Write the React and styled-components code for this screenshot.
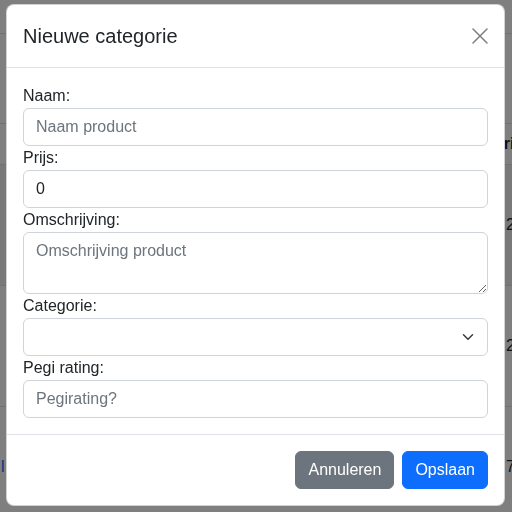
import styled, { createGlobalStyle } from "styled-components";

const GlobalStyle = createGlobalStyle`
    * {
        box-sizing: border-box;
    }

    body {
        margin: 0;
        font-family: "Liberation Sans", Arial, sans-serif;
        font-size: 16px;
        line-height: 1.5;
        color: #212529;
        background: #fff;
        overflow: hidden;
    }
`;

/* page that sits behind the backdrop */

const Page = styled.div`
    height: 100vh;
    overflow: hidden;
`;

const TopBar = styled.div`
    height: 34px;
    border-bottom: 1px solid #dee2e6;
`;

const Intro = styled.div`
    height: 89px;
`;

const Table = styled.div`
    border-top: 1px solid #dee2e6;
`;

const Row = styled.div`
    display: grid;
    grid-template-columns: 490px 1fr;
    align-items: center;
    height: ${({ $head }) => ($head ? "41px" : "121px")};
    border-bottom: 1px solid #dee2e6;
    background: ${({ $striped }) => ($striped ? "rgba(0, 0, 0, 0.05)" : "transparent")};
    font-weight: ${({ $head }) => ($head ? 700 : 400)};
`;

const Cell = styled.div`
    padding-left: ${({ $offset }) => $offset || 0}px;
    white-space: nowrap;
    overflow: hidden;
`;

const Link = styled.span`
    color: #0d6efd;
`;

const Backdrop = styled.div`
    position: fixed;
    inset: 0;
    background: rgba(0, 0, 0, 0.5);
`;

/* modal */

const ModalLayer = styled.div`
    position: fixed;
    inset: 0;
    padding: 4px 0 0 6px;
`;

const ModalContent = styled.div`
    width: 499px;
    background: #fff;
    border: 1px solid rgba(0, 0, 0, 0.175);
    border-radius: 8px;
`;

const ModalHeader = styled.div`
    display: flex;
    align-items: center;
    justify-content: space-between;
    padding: 16px;
    border-bottom: 1px solid #dee2e6;
`;

const ModalTitle = styled.h5`
    margin: 0;
    font-size: 20px;
    font-weight: 500;
    line-height: 1.5;
`;

const CloseButton = styled.button`
    background: none;
    border: none;
    padding: 0;
    width: 16px;
    height: 16px;
    display: flex;
    opacity: 0.5;
    cursor: pointer;
`;

const ModalBody = styled.div`
    padding: 16px;
`;

const Label = styled.label`
    display: block;
`;

const fieldStyles = `
    display: block;
    width: 100%;
    padding: 6px 12px;
    font-family: inherit;
    font-size: 16px;
    line-height: 1.5;
    color: #212529;
    background: #fff;
    border: 1px solid #ced4da;
    border-radius: 6px;
    outline: none;

    &::placeholder {
        color: #6c757d;
        opacity: 1;
    }
`;

const Input = styled.input`
    ${fieldStyles}
    height: 38px;
`;

const TextArea = styled.textarea`
    ${fieldStyles}
    height: 62px;
    resize: vertical;
`;

const SelectWrap = styled.div`
    position: relative;
`;

const Select = styled.select`
    ${fieldStyles}
    height: 38px;
    appearance: none;
`;

const Chevron = styled.svg`
    position: absolute;
    right: 12px;
    top: 13px;
    width: 16px;
    height: 12px;
    pointer-events: none;
`;

const ModalFooter = styled.div`
    display: flex;
    justify-content: flex-end;
    align-items: center;
    padding: 12px;
    border-top: 1px solid #dee2e6;
`;

const Button = styled.button`
    margin: 4px;
    padding: 6px 12px;
    font-family: inherit;
    font-size: 16px;
    line-height: 1.5;
    color: #fff;
    background: ${({ $variant }) => ($variant === "primary" ? "#0d6efd" : "#6c757d")};
    border: 1px solid ${({ $variant }) => ($variant === "primary" ? "#0d6efd" : "#6c757d")};
    border-radius: 6px;
    cursor: pointer;
`;

export default function App() {
    return (
        <>
            <GlobalStyle />
            <Page>
                <TopBar />
                <Intro />
                <Table>
                    <Row $head>
                        <Cell />
                        <Cell $offset={3}>Prijs</Cell>
                    </Row>
                    <Row $striped>
                        <Cell />
                        <Cell $offset={16}>29.99</Cell>
                    </Row>
                    <Row>
                        <Cell />
                        <Cell $offset={16}>24.99</Cell>
                    </Row>
                    <Row>
                        <Cell $offset={1}>
                            <Link>l</Link>
                        </Cell>
                        <Cell $offset={16}>7.50</Cell>
                    </Row>
                </Table>
            </Page>
            <Backdrop />
            <ModalLayer>
                <ModalContent>
                    <ModalHeader>
                        <ModalTitle>Nieuwe categorie</ModalTitle>
                        <CloseButton aria-label="Close">
                            <svg viewBox="0 0 16 16" width="16" height="16" fill="none" stroke="#000" strokeWidth="1.5" strokeLinecap="round">
                                <path d="M1 1l14 14M15 1L1 15" />
                            </svg>
                        </CloseButton>
                    </ModalHeader>
                    <ModalBody>
                        <Label>Naam:</Label>
                        <Input placeholder="Naam product" />
                        <Label>Prijs:</Label>
                        <Input defaultValue="0" />
                        <Label>Omschrijving:</Label>
                        <TextArea rows={2} placeholder="Omschrijving product" />
                        <Label>Categorie:</Label>
                        <SelectWrap>
                            <Select defaultValue="">
                                <option value=""></option>
                            </Select>
                            <Chevron viewBox="0 0 16 16">
                                <path d="m2 5 6 6 6-6" fill="none" stroke="#343a40" strokeWidth="2" strokeLinecap="round" strokeLinejoin="round" />
                            </Chevron>
                        </SelectWrap>
                        <Label>Pegi rating:</Label>
                        <Input placeholder="Pegirating?" />
                    </ModalBody>
                    <ModalFooter>
                        <Button $variant="secondary">Annuleren</Button>
                        <Button $variant="primary">Opslaan</Button>
                    </ModalFooter>
                </ModalContent>
            </ModalLayer>
        </>
    );
}
